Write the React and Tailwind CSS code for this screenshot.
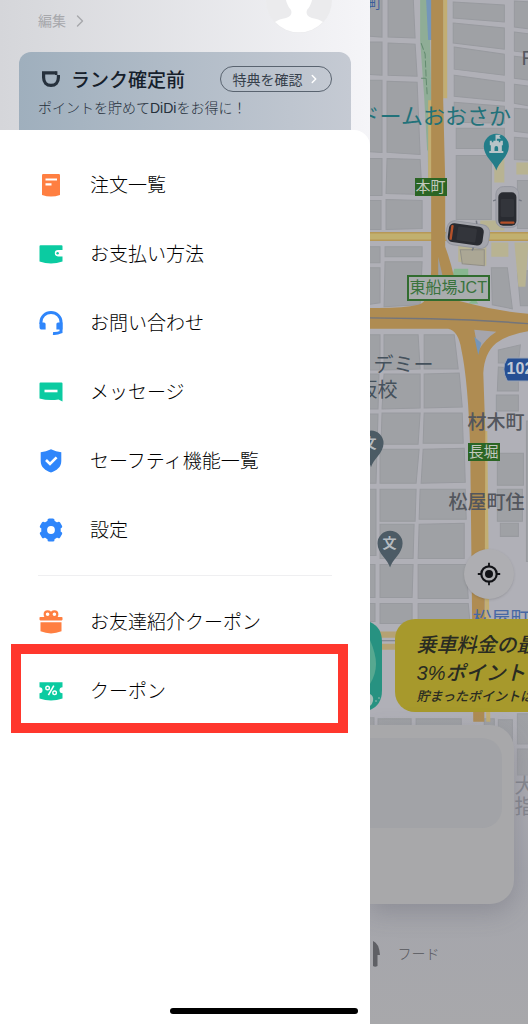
import { ChevronRight } from "lucide-react";

const OrdersIcon = () => (
  <svg viewBox="0 0 26 26" className="h-[26px] w-[26px]" aria-hidden="true">
    <path d="M4 3.2 Q4 2 5.2 2 H20.8 Q22 2 22 3.2 V23 Q13 26 4 23 Z" fill="#ff7f41" />
    <path d="M7.5 7.5 H19 M7.5 12.3 H13.5" stroke="#fff" strokeWidth="2.2" />
  </svg>
);

const WalletIcon = () => (
  <svg viewBox="0 0 26 26" className="h-[26px] w-[26px]" aria-hidden="true">
    <path
      d="M1.5 5.2 Q1.5 4.2 2.5 4.2 H23.5 Q24.5 4.2 24.5 5.2 V9 H20 A3.2 3.2 0 0 0 20 15.4 H24.5 V20.5 Q13 24.6 1.5 20.5 Z"
      fill="#0bcba1"
    />
    <path d="M24.5 9.8 H20.2 A2.4 2.4 0 0 0 20.2 14.6 H24.5 Z" fill="#fff" />
    <circle cx="19.6" cy="12.2" r="1.2" fill="#0bcba1" />
  </svg>
);

const SupportIcon = () => (
  <svg viewBox="0 0 26 26" className="h-[26px] w-[26px]" aria-hidden="true">
    <path d="M3 14 V12 A10 9.6 0 0 1 23 12 V22 Q19 23.8 15 23.4" fill="none" stroke="#2f86fb" strokeWidth="3" />
    <path d="M1.5 12.5 H6 Q7.6 12.5 7.6 14 V19.6 H4 Q1.5 19.6 1.5 17 Z" fill="#2f86fb" />
    <path d="M24.5 12.5 H20 Q18.4 12.5 18.4 14 V19.6 H24.5 Z" fill="#2f86fb" />
  </svg>
);

const MessageIcon = () => (
  <svg viewBox="0 0 26 26" className="h-[26px] w-[26px]" aria-hidden="true">
    <path d="M1.5 4.5 Q1.5 3.5 2.5 3.5 H23.5 Q24.5 3.5 24.5 4.5 V22.5 L20.5 20.6 Q10 22 1.5 19.5 Z" fill="#0bcba1" />
    <path d="M6.5 12 H19.5" stroke="#fff" strokeWidth="2.6" />
  </svg>
);

const SafetyIcon = () => (
  <svg viewBox="0 0 26 26" className="h-[26px] w-[26px]" aria-hidden="true">
    <path d="M13 1.3 Q18 3.8 23.3 4.2 V13 C23.3 19.5 18.5 22.3 13 24.6 C7.5 22.3 2.7 19.5 2.7 13 V4.2 Q8 3.8 13 1.3 Z" fill="#2f86fb" />
    <path d="M8 12 L12 16 L18.6 9.4" fill="none" stroke="#fff" strokeWidth="2.6" />
  </svg>
);

const SettingsIcon = () => (
  <svg viewBox="0 0 26 26" className="h-[26px] w-[26px]" aria-hidden="true">
    <g fill="#2f86fb">
      <circle cx="13" cy="13" r="9.8" />
      <rect x="9.5" y="1.4" width="7" height="23.2" rx="1.6" />
      <rect x="9.5" y="1.4" width="7" height="23.2" rx="1.6" transform="rotate(60 13 13)" />
      <rect x="9.5" y="1.4" width="7" height="23.2" rx="1.6" transform="rotate(120 13 13)" />
    </g>
    <circle cx="13" cy="13" r="3.9" fill="#fff" />
  </svg>
);

const GiftIcon = () => (
  <svg viewBox="0 0 26 26" className="h-[26px] w-[26px]" aria-hidden="true">
    <rect x="1.5" y="8" width="23" height="3.4" rx="0.8" fill="#ff7f41" />
    <path d="M2.5 13.2 H23.5 V22.3 Q13 26.6 2.5 22.3 Z" fill="#ff7f41" />
    <circle cx="9.6" cy="5.3" r="2.9" fill="none" stroke="#ff7f41" strokeWidth="2.2" />
    <circle cx="16.4" cy="5.3" r="2.9" fill="none" stroke="#ff7f41" strokeWidth="2.2" />
  </svg>
);

const CouponIcon = () => (
  <svg viewBox="0 0 26 26" className="h-[26px] w-[26px]" aria-hidden="true">
    <path
      d="M1.5 4.3 H24.5 V9.3 A3 3 0 0 0 24.5 15.3 V20.4 Q13 24.4 1.5 20.4 V15.3 A3 3 0 0 0 1.5 9.3 Z"
      fill="#0bcba1"
    />
    <path d="M15.8 7.6 L10.4 17.2" stroke="#fff" strokeWidth="1.6" />
    <circle cx="9.6" cy="10" r="1.8" fill="none" stroke="#fff" strokeWidth="1.4" />
    <circle cx="16.6" cy="14.8" r="1.8" fill="none" stroke="#fff" strokeWidth="1.4" />
  </svg>
);

const mainMenu = [
  { label: "注文一覧", Icon: OrdersIcon },
  { label: "お支払い方法", Icon: WalletIcon },
  { label: "お問い合わせ", Icon: SupportIcon },
  { label: "メッセージ", Icon: MessageIcon },
  { label: "セーフティ機能一覧", Icon: SafetyIcon },
  { label: "設定", Icon: SettingsIcon },
];

const couponMenu = [
  { label: "お友達紹介クーポン", Icon: GiftIcon },
  { label: "クーポン", Icon: CouponIcon, highlighted: true },
];

const MenuItem = ({ label, Icon, highlighted }) => (
  <li className="relative">
    <a href="#" className="flex h-[69px] items-center gap-[26px] text-[19px] font-light text-black">
      <Icon />
      <span className="pt-1">{label}</span>
    </a>
    {highlighted && (
      <span className="pointer-events-none absolute -top-3 -right-4 -bottom-2 -left-[27px] border-10 border-[#ff372d]" />
    )}
  </li>
);

const Drawer = () => (
  <aside className="flex w-[70%] shrink-0 flex-col bg-linear-to-r from-[#d5d6da] to-[#f5f5f8]">
    <div className="flex h-[52px] items-start justify-between px-[38px]">
      <a href="#" className="mt-[10px] flex items-center gap-1 text-sm text-[#a7a8ac]">
        <span className="pt-px">編集</span>
        <ChevronRight className="h-5 w-5" strokeWidth={1.7} />
      </a>
      <svg viewBox="0 0 66 66" className="-mt-[33px] h-[66px] w-[66px]" aria-hidden="true">
        <circle cx="33" cy="33" r="33" fill="#ebebed" />
        <path d="M18 20 H48 Q47 37 41 43 Q39 49 46 51 Q53 52 57 55 A33 33 0 0 1 9 55 Q13 52 20 51 Q27 49 25 43 Q19 37 18 20 Z" fill="#fff" />
      </svg>
    </div>

    <section className="mx-[19px] rounded-t-xl bg-linear-to-r from-[#9fafbd] to-[#c5cad3] px-[19px] pt-[14px] pb-3">
      <div className="flex h-[26px] items-center justify-between">
        <h1 className="flex items-center gap-[7px] text-[19px] leading-[26px] font-medium text-[#16202b]">
          <svg viewBox="0 0 26 26" className="h-[26px] w-[26px]" aria-hidden="true">
            <path
              d="M17.5 6.8 H5.6 V11.5 C5.6 16.4 8.6 19.4 13 19.4 C17.4 19.4 20.4 16.4 20.4 11.5 V9"
              fill="none"
              stroke="#26313d"
              strokeWidth="3.2"
            />
            <path d="M17 5.2 H19.4 V9 H17 Z" fill="#26313d" />
          </svg>
          <span className="pt-1">ランク確定前</span>
        </h1>
        <button
          type="button"
          className="flex h-[26px] items-center gap-1 rounded-full border border-[#59636f] pr-[10px] pl-3 text-sm text-[#36404b]"
        >
          <span className="pt-px">特典を確認</span>
          <ChevronRight className="h-[14px] w-[14px] text-white" strokeWidth={2.5} />
        </button>
      </div>
      <p className="mt-[6px] text-sm leading-5 font-light whitespace-nowrap text-[#26303b]">
        ポイントを貯めてDiDiをお得に！
      </p>
    </section>

    <nav className="flex-1 rounded-tr-2xl bg-white px-[38px] pt-5">
      <ul>
        {mainMenu.map((item) => (
          <MenuItem key={item.label} {...item} />
        ))}
      </ul>
      <hr className="my-[11px] border-[#efeff1]" />
      <ul>
        {couponMenu.map((item) => (
          <MenuItem key={item.label} {...item} />
        ))}
      </ul>
    </nav>
  </aside>
);

// city blocks between the streets
const blocks = [
  // west side, north of the expressway
  "-4,-4 12,-4 12,37 -4,36",
  "18,-4 43,-4 45,38 18,37",
  "-4,42 12,42 12,75 -4,74",
  "18,43 45,44 47,76 18,75",
  "-4,80 12,80 12,152 -4,151",
  "17,81 47,82 50,154 17,152",
  "-4,158 12,158 12,195 -4,195",
  "17,158 50,159 52,194 16,193",
  "-4,200 11,200 11,229 -4,229",
  "16,199 52,200 52,228 16,229",
  "-4,246 10,246 10,262 -4,262",
  "15,246 52,246 52,256 15,256",
  "15,261 52,261 50,304 14,306",
  "-4,267 10,267 10,302 -4,304",
  // east side
  "83,2 134,5 134,22 83,18",
  "83,23 134,28 134,49 83,43",
  "84,47 134,54 134,75 84,69",
  "84,75 134,82 134,101 84,96",
  "84,102 134,106 134,123 84,122",
  "86,128 134,128 134,148 86,148",
  "86,155 121,155 121,219 86,219",
  "144,1 160,2 160,29 144,27",
  "144,32 160,34 160,53 144,51",
  "144,56 160,58 160,80 144,78",
  "144,84 160,86 160,106 144,103",
  "144,108 160,109 160,133 144,131",
  "144,137 160,138 160,160 144,159",
  "147,180 160,180 160,228 147,228",
  "147,270 160,270 160,305 150,305",
  "121,267 137,267 142,308 122,304",
  // south of the expressway
  "-4,334 10,334 10,369 -4,369",
  "14,334 48,334 50,368 14,369",
  "54,334 84,334 88,368 54,368",
  "-4,373 9,373 8,408 -4,408",
  "14,373 50,373 50,407 12,408",
  "54,373 89,372 92,406 54,407",
  "-4,413 8,413 6,482 -4,482",
  "12,412 50,412 48,443 11,443",
  "54,412 92,412 93,442 53,442",
  "10,448 49,448 46,482 10,482",
  "53,448 94,447 95,481 51,482",
  "-4,488 6,488 6,554 -4,554",
  "10,488 46,488 45,520 10,520",
  "50,488 95,488 96,518 49,518",
  "10,523 44,523 43,557 10,557",
  "49,523 94,522 94,557 48,557",
  "-4,563 5,563 5,596 -4,596",
  "10,563 43,563 42,596 10,596",
  "48,563 96,563 98,597 48,597",
  "-4,602 5,602 5,620 -4,620",
  "10,602 42,602 42,622 10,622",
  "48,602 98,602 100,624 48,624",
  "128,349 150,344 148,362 128,362",
  "128,366 148,368 148,390 127,390",
  "126,394 148,394 148,410 126,410",
  "127,452 153,452 153,484 127,484",
  "127,488 152,488 152,520 127,520",
  "130,522 148,522 148,535 130,535",
  "156,420 162,420 162,560 156,560",
  "-4,716 4,716 4,745 -4,745",
  "8,717 41,717 41,745 8,745",
  "46,717 91,717 91,745 46,745",
  "114,717 124,717 124,745 114,745",
  "128,718 142,718 142,745 128,745",
  "147,712 162,712 162,742 147,742",
  "147,747 162,747 162,773 147,773",
];

const Car = ({ transform }) => (
  <g transform={transform}>
    <rect x="-21" y="-12" width="43" height="24" rx="8" fill="#a4a5ac" stroke="#94969f" />
    <rect x="-19" y="-9.5" width="35" height="19" rx="5" fill="#292b31" />
    <rect x="-10" y="-7" width="19" height="14" rx="1.5" fill="#33353b" />
    <rect x="-17" y="-7.5" width="2.4" height="15" rx="1" fill="#b4512a" />
    <path d="M8 -12 L7 -15 M8 12 L7 15" stroke="#767a84" strokeWidth="1.5" />
  </g>
);

const Pin = ({ x, y, fill }) => (
  <path
    transform={`translate(${x} ${y})`}
    d="M0 24 C-2 16 -12.5 10 -12.5 0 A12.5 12.5 0 0 1 12.5 0 C12.5 10 2 16 0 24 Z"
    fill={fill}
  />
);

const CityMap = () => (
  <svg
    viewBox="0 0 158 1024"
    preserveAspectRatio="xMinYMin slice"
    className="absolute inset-0 h-full w-full"
    aria-hidden="true"
  >
    <defs>
      <linearGradient id="fade" x1="0" y1="0" x2="0" y2="1">
        <stop offset="0" stopColor="#a6a6ab" stopOpacity="0" />
        <stop offset="0.5" stopColor="#a4a5ac" />
        <stop offset="1" stopColor="#a8a8ab" />
      </linearGradient>
    </defs>
    <rect width="158" height="1024" fill="#b0b0b7" />
    <g fill="#9fa1a5" stroke="#989a9f" strokeWidth="1">
      {blocks.map((points) => (
        <polygon key={points} points={points} />
      ))}
    </g>

    {/* commercial areas */}
    <g fill="#b8b392">
      <path d="M124 158 h10 v24 h-10z M146 162 h14 v12 h-14z M110 220 H134 V230 H110z M144 242 h14 l-3 44 h-7z M88 245 h28 v20 l-28 -4z M121 242 h17 v14 h-17z" />
    </g>
    <path d="M90 249 h24 v16 l-22 -2z" fill="#aba795" stroke="#918f86" />

    {/* river and park */}
    <path d="M50 0 H60 V40 L62 150 H57 L54 96 L50 40 Z" fill="#8fad96" />
    <path d="M56 0 H63 V40 H58 Z" fill="#7496ba" />
    <path d="M51 43 L55 54 L56 78 H51 M56 78 L57 94" fill="none" stroke="#648b70" strokeDasharray="7 2" />
    <path d="M57 105 H60 V178 H58 Z" fill="#8fad96" />
    <path d="M84 268 H98 V276 H82z M98 303 h10 l-4 -6z" fill="#88b690" />

    {/* surface roads */}
    <g fill="none">
      <path d="M-2 236 H160" stroke="#b69857" strokeWidth="9" />
      <path d="M-2 236 H160" stroke="#c1b06f" strokeWidth="6" />
      <path d="M60 100 V180 M75 0 V98" stroke="#c2ae73" strokeWidth="4" />
      <path d="M115 430 L118 720" stroke="#c2ae73" strokeWidth="4" />
      <path d="M-2 633 H30 M-2 645 H30" stroke="#b5a273" strokeWidth="6" />
      <path d="M-2 639 H30" stroke="#777b86" />
    </g>

    {/* expressways */}
    <path
      d="M61 0 H73 V100 L75 180 V246 Q84 270 88 300 L100 303 Q130 311 160 313 V330 Q138 333 126 342 Q114 352 113 372 L115 430 L114 720 H103 L100 450 Q98 380 91 348 Q88 330 78 328 H-4 V307 Q30 308 48 304 Q60 302 61 270 Z"
      fill="#af8c52"
    />
    <path d="M68 256 L73 278 L68 278 Z" fill="#9b9ea3" />
    <path d="M104 329 L108 350 Q115 338 126 331 Z" fill="#a5a5ac" />
    <path d="M104 336 L108 354 L111 342 Z" fill="#7496ba" />
    <path d="M-2 317 L60 318 Q110 319 160 323" fill="none" stroke="#73757c" strokeWidth="1.4" />

    {/* museum pin */}
    <Pin x={126} y={146} fill="#237d89" />
    <path
      d="M119 152.500 V150.500 H120.500 V145 H119.500 V140.500 H121.500 V142 H123 V140.500 H125.200 V134.500 H130.500 L129 136.400 L130.500 138.300 H126.500 V140.500 H128.500 V142 H130 V140.500 H132.500 V145 H131.500 V150.500 H133 V152.500 Z"
      fill="#b8c4c8"
    />
    <path d="M124.200 150.500 V147.500 A1.800 1.800 0 0 1 127.800 147.500 V150.500 Z" fill="#237d89" />

    {/* school pins */}
    <Pin x={1} y={442} fill="#4c5b65" />
    <Pin x={20} y={542} fill="#4c5b65" />

    <path d="M137 357 H160 V380 H137 Q130 368 137 357 Z" fill="#264f93" stroke="#9aa3b4" />

    <Car transform="translate(97 234) rotate(8)" />
    <Car transform="translate(137 207) rotate(-90) scale(0.95)" />

    <rect y="712" width="158" height="312" fill="url(#fade)" />
  </svg>
);

const labels = [
  { text: "町", style: "-left-px -top-[6px] text-[13px] text-[#3b5c9b]" },
  { text: "R", style: "left-[152px] top-12 text-xl text-[#565960]" },
  { text: "ドームおおさか", style: "-left-3 top-[107px] text-[22px] text-[#22727a]" },
  { text: "本町", style: "left-[45px] top-[178px] bg-[#2b6524] px-px text-[15px] !leading-[18px] text-[#c1c8bd]" },
  { text: "東船場JCT", style: "left-[37px] top-[275px] border-2 border-[#316c2f] bg-[#a9acae] px-px text-base !leading-[22px] text-[#3a733d]" },
  { text: "デミー", style: "left-1 top-[355px] text-xl text-[#45515c]" },
  { text: "阪校", style: "-left-3 top-[380px] text-xl text-[#45515c]" },
  { text: "102", style: "left-[137px] top-[359px] text-base font-bold text-[#c1c9d6]" },
  { text: "材木町", style: "left-[98px] top-[413px] text-[19px] font-medium text-[#53565d]" },
  { text: "長堀", style: "left-[98px] top-[443px] bg-[#2b6524] px-px text-[15px] !leading-[18px] text-[#c1c8bd]" },
  { text: "松屋町住", style: "left-[79px] top-[493px] text-[19px] font-medium text-[#53565d]" },
  { text: "文", style: "-left-[7px] top-[433px] text-sm font-bold text-[#b5bbc0]" },
  { text: "文", style: "left-[13px] top-[533px] text-sm font-bold text-[#b5bbc0]" },
  { text: "松屋町", style: "left-[103px] top-[610px] text-[19px] text-[#4668a5]" },
  { text: "大", style: "left-[145px] top-[776px] text-xl text-[#85878f]" },
  { text: "指", style: "left-[145px] top-[797px] text-xl text-[#85878f]" },
];

const MapScreen = () => (
  <main className="relative flex min-w-0 flex-1 flex-col overflow-hidden bg-[#a8a8ab]">
    <CityMap />
    {labels.map(({ text, style }, i) => (
      <span key={i} className={`absolute leading-5 whitespace-nowrap ${style}`}>
        {text}
      </span>
    ))}

    <div className="flex flex-1 items-end justify-end pr-[14px] pb-5">
      <button
        type="button"
        aria-label="現在地"
        className="relative flex h-[50px] w-[50px] items-center justify-center rounded-full bg-[#aeaeb2] shadow-sm"
      >
        <svg viewBox="0 0 24 24" className="h-6 w-6" aria-hidden="true">
          <circle cx="12" cy="12" r="7.7" fill="none" stroke="#111216" strokeWidth="2.2" />
          <circle cx="12" cy="12" r="4" fill="#111216" />
          <path d="M12 0.8 V5 M12 19 V23.2 M0.8 12 H5 M19 12 H23.2" stroke="#111216" strokeWidth="1.8" />
        </svg>
      </button>
    </div>

    <div className="relative flex h-[93px] items-center gap-[13px]">
      <svg viewBox="0 0 12 88" className="h-[88px] w-3 shrink-0" aria-hidden="true">
        <path d="M0 0 Q12 5 12 20 V68 Q12 83 0 88 Z" fill="#279281" />
        <path d="M0 18 Q6 32 6 42 Q6 52 0 62 Z" fill="#57a890" />
        <path d="M0 72 Q4 74 3 79 Q2 83 0 84 Z" fill="#a5bdb6" />
        <circle cx="6" cy="79" r="0.8" fill="#a5bdb6" />
        <circle cx="9" cy="76" r="0.8" fill="#a5bdb6" />
      </svg>
      <div className="h-full w-[300px] shrink-0 rounded-[20px] bg-[#a7992c] pt-3 pl-[22px] font-medium whitespace-nowrap text-[#292b22] italic">
        <p className="text-xl leading-7">乗車料金の最</p>
        <p className="text-xl leading-7">3%ポイント</p>
        <p className="text-[13px] leading-5">貯まったポイントは</p>
      </div>
    </div>

    <div className="relative mt-[13px] mr-[14px] h-[179px] rounded-r-3xl bg-[#a8a8aa] pt-[13px] pr-3 shadow-[0_8px_24px_rgba(80,80,95,0.28)]">
      <div className="h-[90px] rounded-r-[20px] bg-[#a2a3a7]" />
    </div>

    <div className="relative flex h-[120px] items-start gap-[18px] pt-9 text-sm font-light text-[#55565b]">
      <svg viewBox="0 0 10 28" className="h-7 w-[10px]" aria-hidden="true">
        <path d="M3 1 Q9 3 10 15 H7.5 V26 Q5 27.5 3 26 Z" fill="#5f6065" />
      </svg>
      <span className="leading-7">フード</span>
    </div>
  </main>
);

const App = () => {
  return (
    <div className="relative flex min-h-screen font-['Liberation_Sans','Noto_Sans_CJK_JP',sans-serif]">
      <Drawer />
      <MapScreen />
      <div className="absolute inset-x-0 bottom-[10px] mx-auto h-[6px] w-[188px] rounded-full bg-black" />
    </div>
  );
};

export default App;
